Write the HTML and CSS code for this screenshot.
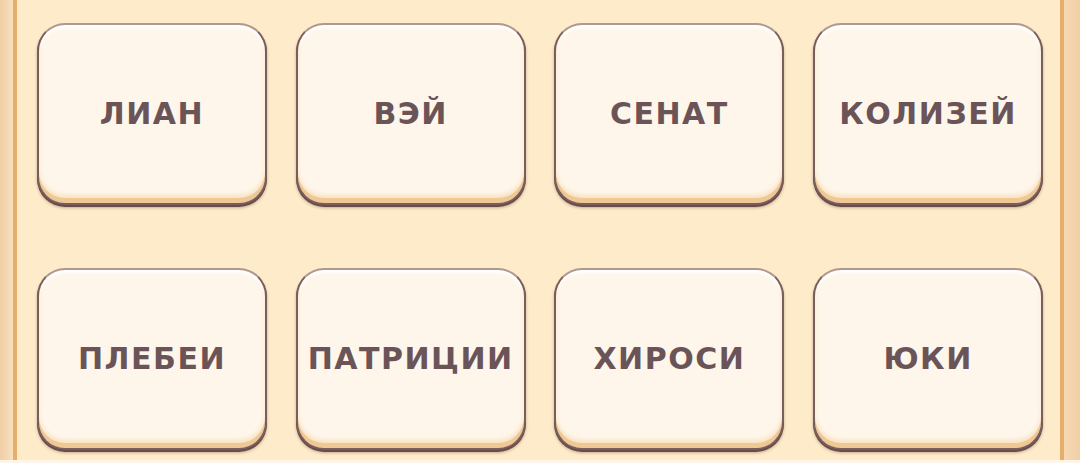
FILE: index.html
```html
<!DOCTYPE html>
<html lang="ru">
  <head>
    <meta charset="UTF-8" />
    <title>Слова</title>
    <link rel="stylesheet" href="styles.css">
  </head>

  <body>
    <div class="board">
      <div class="edge edge-left"></div>

      <main class="panel">
        <section class="cards">
          <button class="card">ЛИАН</button>
          <button class="card">ВЭЙ</button>
          <button class="card">СЕНАТ</button>
          <button class="card">КОЛИЗЕЙ</button>
          <button class="card">ПЛЕБЕИ</button>
          <button class="card">ПАТРИЦИИ</button>
          <button class="card">ХИРОСИ</button>
          <button class="card">ЮКИ</button>
        </section>
      </main>

      <div class="edge edge-right"></div>
    </div>
  </body>
</html>
```

FILE: styles.css
```css
html,
body {
  margin: 0;
  padding: 0;
}

body {
  background-color: #fdf5e9;
  font-family: "DejaVu Sans", "Liberation Sans", sans-serif;
}

.board {
  display: flex;
  height: 460px;
  background-color: #fdebc9;
}

.edge {
  background: linear-gradient(90deg, #f0cfa6, #f8e0bd);
}

.edge-left {
  width: 13px;
}

.edge-right {
  width: 16px;
  background: linear-gradient(90deg, #f6d8b2, #f1d0a7);
}

.panel {
  flex: 1;
  border-left: 4px solid #e6ae6c;
  border-right: 4px solid #e6ae6c;
  padding: 23px 0 0 20px;
}

.cards {
  display: grid;
  grid-template-columns: repeat(4, 230px);
  column-gap: 28.7px;
  row-gap: 63px;
}

.card {
  height: 182px;
  box-sizing: border-box;
  border: 2px solid #7a5e5c;
  border-top-color: #b09891;
  border-radius: 28px;
  background-color: #fef6ea;
  box-shadow:
    inset 0 -5px 0 #f0c893,
    inset 0 -8px 4px #f8e2c2,
    inset 0 3px 3px #ffffff,
    0 2px 0 #6b4b4a,
    0 3px 3px rgba(90, 55, 45, 0.35);
  color: #6b5458;
  font-family: "DejaVu Sans", "Liberation Sans", sans-serif;
  font-weight: 700;
  font-size: 30px;
  letter-spacing: 1.5px;
  padding: 0 0 2px 0;
  cursor: pointer;
}
```
